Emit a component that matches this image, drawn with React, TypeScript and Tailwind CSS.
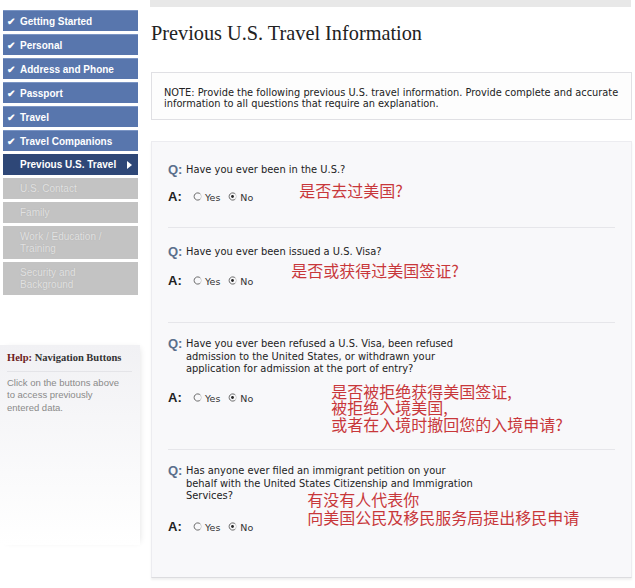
import React from 'react';

const done = ['Getting Started', 'Personal', 'Address and Phone', 'Passport', 'Travel', 'Travel Companions'];

const sans = { fontFamily: '"Liberation Sans", Arial, sans-serif' };
const verdana = { fontFamily: '"DejaVu Sans", Verdana, sans-serif' };
const cjk = { fontFamily: '"Noto Sans CJK SC", sans-serif' };

function Radio({ checked }: { checked?: boolean }) {
  return (
    <svg width="9" height="9" viewBox="0 0 9 9" className="shrink-0">
      <path d="M7.5 2.2 A3.6 3.6 0 1 0 7.5 6.8" fill="none" stroke="#6b6b6b" strokeWidth="1" />
      <path d="M7.5 2.2 A3.6 3.6 0 0 1 7.5 6.8" fill="none" stroke="#d4d4d4" strokeWidth="1" />
      {checked && <circle cx="4.5" cy="4.5" r="1.4" fill="#222" />}
    </svg>
  );
}

function Answer() {
  return (
    <div className="flex items-center shrink-0">
      <span className="text-[13px] font-bold text-[#222] w-[25px]" style={sans}>A:</span>
      <Radio />
      <span className="ml-[3px] text-[9.5px] text-[#333] mt-[3px]" style={verdana}>Yes</span>
      <span className="ml-[8px]"><Radio checked /></span>
      <span className="ml-[3px] text-[9.5px] text-[#333] mt-[3px]" style={verdana}>No</span>
    </div>
  );
}

function Question({ children }: { children: React.ReactNode }) {
  return (
    <div className="flex items-start">
      <span className="text-[13px] font-bold text-[#5b6f8c] w-[18px] leading-[12px]" style={sans}>Q:</span>
      <div className="text-[9.9px] leading-[12.5px] text-[#222]" style={verdana}>{children}</div>
    </div>
  );
}

function Note({ lines, className }: { lines: string[]; className: string }) {
  return (
    <div className={`text-[16px] text-[#c8373a] whitespace-nowrap ${className}`} style={cjk}>
      {lines.map((l, i) => (
        <React.Fragment key={l}>
          {i > 0 && <br />}
          {l}
        </React.Fragment>
      ))}
    </div>
  );
}

export default function App() {
  return (
    <div className="w-[635px] h-[588px] bg-white flex overflow-hidden">
      {/* sidebar */}
      <div className="w-[151px] shrink-0 flex flex-col">
        <div className="pt-[10px] pl-[3px] w-[138px] flex flex-col gap-[3px]" style={sans}>
          {done.map((d) => (
            <div key={d} className="h-[21px] bg-[#5876ad] border-t border-[#7b95c4] flex items-center pl-[4px] text-white text-[10px] font-bold">
              <span className="w-[10px] text-[10px]">✔</span>
              <span className="ml-[3px]">{d}</span>
            </div>
          ))}
          <div className="h-[21px] bg-[#2e4777] flex items-center justify-between pl-[17px] pr-[6px] text-white text-[10px] font-bold">
            <span>Previous U.S. Travel</span>
            <svg width="5" height="8" viewBox="0 0 5 8"><path d="M0 0 L5 4 L0 8 Z" fill="#fff" /></svg>
          </div>
          {['U.S. Contact', 'Family', 'Work / Education / Training', 'Security and Background'].map((d, i) => (
            <div key={d} className={`${i < 2 ? 'h-[21px]' : 'h-[33px]'} bg-[#c3c3c3] flex items-center pl-[17px] pr-[20px] text-[#e2e2e2] text-[10px] leading-[12px]`} style={{ textShadow: '0 0 1px #a9a9a9' }}>
              {d}
            </div>
          ))}
        </div>
        <div className="mt-[50px] w-[140px] h-[200px] bg-gradient-to-b from-[#f1f1f4] to-white pl-[7px] pr-[8px] pt-[5px] shadow-[3px_0_6px_-3px_rgba(0,0,0,0.12)]">
          <div className="text-[10.5px] font-bold text-[#333] pb-[5px] border-b border-[#e4e4e8]" style={{ fontFamily: '"Liberation Serif", serif' }}>
            <span className="text-[#6d1c1c]">Help:</span> Navigation Buttons
          </div>
          <div className="mt-[5px] w-[116px] text-[9.5px] leading-[12.5px] text-[#8a8a8a]" style={sans}>
            Click on the buttons above to access previously entered data.
          </div>
        </div>
      </div>

      {/* main */}
      <div className="w-[481px] shrink-0 flex flex-col">
        <div className="h-[7px] bg-[#e8e8e8] -ml-[1px] mr-[1px]" />
        <div className="mt-[14px] text-[20.3px] leading-[24px] text-[#222]" style={{ fontFamily: '"Liberation Serif", serif' }}>
          Previous U.S. Travel Information
        </div>
        <div className="mt-[27px] h-[48px] border border-[#e0e0e4] bg-[#fdfdfd] pl-[12px] pt-[14px] text-[9.8px] leading-[11px] text-[#222]" style={verdana}>
          NOTE: Provide the following previous U.S. travel information. Provide complete and accurate information to all questions that require an explanation.
        </div>
        <div className="mt-[21px] h-[437px] bg-[#f8f8fa] border border-[#ececf0] border-b-[#dcdcdf] shadow-[0_2px_2px_rgba(0,0,0,0.06)] px-[16px] flex flex-col">
          {/* block 1 */}
          <div className="h-[86px] border-b border-[#e6e6ea] pt-[22px]">
            <Question>Have you ever been in the U.S.?</Question>
            <div className="mt-[10px] flex items-start">
              <Answer />
              <Note lines={['是否去过美国?']} className="ml-[46px] -mt-[5px] leading-[16.5px]" />
            </div>
          </div>
          {/* block 2 */}
          <div className="h-[95px] border-b border-[#e6e6ea] pt-[18px]">
            <Question>Have you ever been issued a U.S. Visa?</Question>
            <div className="mt-[12px] flex items-start">
              <Answer />
              <Note lines={['是否或获得过美国签证?']} className="ml-[38px] -mt-[9px] leading-[16.5px]" />
            </div>
          </div>
          {/* block 3 */}
          <div className="h-[127px] border-b border-[#e6e6ea] pt-[15px]">
            <Question>
              Have you ever been refused a U.S. Visa, been refused
              <br />
              admission to the United States, or withdrawn your
              <br />
              application for admission at the port of entry?
            </Question>
            <div className="mt-[12px] flex items-start">
              <Answer />
              <Note lines={['是否被拒绝获得美国签证,', '被拒绝入境美国,', '或者在入境时撤回您的入境申请?']} className="ml-[78px] -mt-[5px] leading-[16.7px]" />
            </div>
          </div>
          {/* block 4 */}
          <div className="flex-1 pt-[15px]">
            <Question>
              Has anyone ever filed an immigrant petition on your
              <br />
              behalf with the United States Citizenship and Immigration
              <br />
              Services?
            </Question>
            <div className="mt-[14px] flex items-start">
              <Answer />
              <Note lines={['有没有人代表你', '向美国公民及移民服务局提出移民申请']} className="ml-[54px] -mt-[27px] leading-[18px]" />
            </div>
          </div>
        </div>
      </div>
    </div>
  );
}
